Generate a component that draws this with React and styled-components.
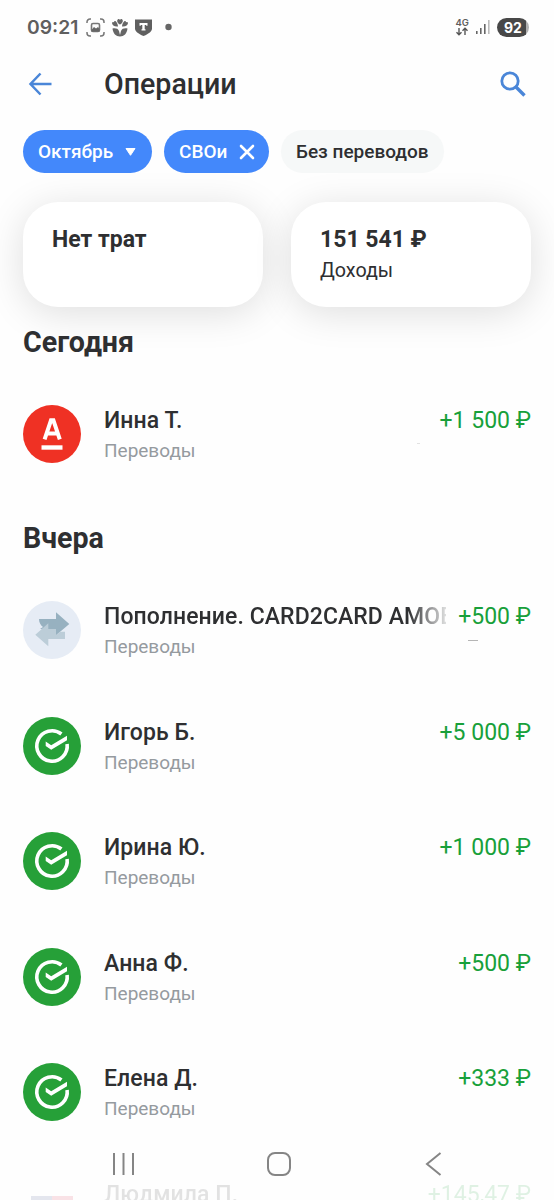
import React from 'react';
import styled, { createGlobalStyle } from 'styled-components';

const GlobalStyle = createGlobalStyle`
  * {
    box-sizing: border-box;
  }

  body {
    margin: 0;
    background: #fefefe;
    color: #2e2f31;
    font-family: Roboto, 'Liberation Sans', sans-serif;
  }
`;

const Screen = styled.div`
  position: relative;
  width: 554px;
  height: 1200px;
  overflow: hidden;
  background: #fefefe;
`;

const StatusBar = styled.div`
  display: flex;
  align-items: center;
  height: 54px;
  padding: 0 25px 0 27px;
  color: #5f5f5f;
`;

const Clock = styled.span`
  width: 52px;
  font-family: Inter, Roboto, sans-serif;
  font-size: 19.3px;
  font-weight: 600;
  white-space: nowrap;
`;

const StatusIcons = styled.div`
  display: flex;
  align-items: center;
  gap: 6px;
  margin-left: 7px;
`;

const Network = styled.div`
  display: flex;
  flex-direction: column;
  align-items: center;
  margin-left: auto;
  margin-right: 7px;
  font-family: Inter, Roboto, sans-serif;
  font-size: 9.5px;
  font-weight: 600;
  line-height: 9px;
`;

const Battery = styled.div`
  width: 32px;
  height: 19px;
  margin-left: 7px;
  border-radius: 10px;
  background: linear-gradient(90deg, #484848 92%, #b0b0b0 92%);
  color: #fff;
  font-family: Inter, Roboto, sans-serif;
  font-size: 14px;
  font-weight: 700;
  line-height: 19px;
  text-align: center;
`;

const Header = styled.header`
  display: flex;
  align-items: center;
  height: 60px;
  padding: 0 28px;
`;

const Title = styled.h1`
  flex: 1;
  margin: 0 0 0 52px;
  font-size: 28.6px;
  font-weight: 500;
  line-height: 36px;
`;

const Filters = styled.div`
  display: flex;
  gap: 12px;
  padding: 16px 23px 0;
`;

const Chip = styled.button`
  display: flex;
  align-items: center;
  justify-content: space-between;
  width: ${props => props.$width}px;
  height: 43px;
  padding: 0 14px 0 15px;
  border: none;
  border-radius: 22px;
  background: ${props => (props.$active ? '#4388fb' : '#f6f8f8')};
  color: ${props => (props.$active ? '#fff' : '#2e2f31')};
  font-family: inherit;
  font-size: 19px;
  font-weight: 500;
  white-space: nowrap;
`;

const Summary = styled.div`
  display: grid;
  grid-template-columns: 1fr 1fr;
  gap: 28px;
  padding: 29px 23px 0;
`;

const SummaryCard = styled.div`
  height: 105px;
  padding: 24px 29px;
  border-radius: 35px;
  background: #fff;
  box-shadow: 0 6px 38px rgba(0, 0, 0, 0.13);
`;

const SummaryValue = styled.div`
  font-size: 23px;
  font-weight: 700;
  line-height: 28px;
`;

const SummaryLabel = styled.div`
  margin-top: 4px;
  font-size: 19.7px;
  line-height: 26px;
`;

const SectionTitle = styled.h2`
  height: 36px;
  margin: ${props => props.$top}px 0 0 23px;
  font-size: 28.6px;
  font-weight: 700;
  line-height: 36px;
`;

const List = styled.div`
  padding: ${props => props.$top}px 23px 0;
`;

const Row = styled.div`
  position: relative;
  display: flex;
  align-items: center;
  height: 115.5px;
  opacity: ${props => (props.$faded ? 0.13 : 1)};
`;

const Details = styled.div`
  flex: 1;
  min-width: 0;
  margin-left: 23px;
  padding-top: 2.6px;
`;

const TopLine = styled.div`
  display: flex;
  justify-content: space-between;
  line-height: 30px;
`;

const Name = styled.span`
  flex: 1;
  min-width: 0;
  margin-right: 12px;
  overflow: hidden;
  font-size: 23px;
  font-weight: 500;
  letter-spacing: 0.08px;
  white-space: nowrap;
  mask-image: ${props =>
    props.$fade ? 'linear-gradient(90deg, #000 calc(100% - 38px), rgba(0, 0, 0, 0.15))' : 'none'};
`;

const Amount = styled.span`
  color: #18a03a;
  font-size: 23px;
  white-space: nowrap;
`;

const Category = styled.div`
  margin-top: 1px;
  color: #959a9f;
  font-size: 19px;
  line-height: 28px;
`;

const Mark = styled.i`
  position: absolute;
  right: ${props => props.$right}px;
  top: ${props => props.$top}px;
  width: ${props => props.$width}px;
  height: 1px;
  background: ${props => props.$color};
`;

const NavBar = styled.nav`
  position: absolute;
  left: 0;
  right: 0;
  bottom: 0;
  display: grid;
  grid-template-columns: 155px 155px 155px;
  align-items: center;
  justify-content: center;
  justify-items: center;
  height: 72px;
  padding-left: 3px;
`;

function AlfaLogo() {
  return (
    <svg width='58' height='58' viewBox='0 0 58 58'>
      <circle cx='29' cy='29' r='29' fill='#ef3124' />
      <path d='M21.600 34.400 28 15.300h2.400l6.400 19.100M24 28.500h11' fill='none' stroke='#fff' strokeWidth='4' />
      <path d='M18.500 40.300h21v4.400h-21z' fill='#fff' />
    </svg>
  );
}

function TransferLogo() {
  return (
    <svg width='58' height='58' viewBox='0 0 58 58'>
      <circle cx='29' cy='29' r='29' fill='#e6ecf5' />
      <path d='M16 18h17v-6.700l13.300 11.700L33 34.300V28H17l3-2c-2.500-2-4-4.500-4-8z' fill='#97b1c0' />
      <path d='M42 38H25.300v7.300L12.300 33.700l13-11.400V28H33v6.300l4-3.600h5z' fill='#bccdd8' />
    </svg>
  );
}

function SberLogo() {
  return (
    <svg width='58' height='58' viewBox='0 0 58 58'>
      <circle cx='29' cy='29' r='29' fill='#26a038' />
      <path d='M38.400 17A15.200 15.200 0 1 0 44.100 27' fill='none' stroke='#fff' strokeWidth='3.600' />
      <path d='M22.700 24.500 28.200 28.200 44 18.800v4.500L28.200 32.700 22.700 29z' fill='#fff' />
    </svg>
  );
}

function FlagLogo() {
  return (
    <svg width='58' height='58' viewBox='0 0 58 58'>
      <path d='M8 17h21v14H8z' fill='#3d4a8c' />
      <path d='M29 17h21v14H29z' fill='#d9304c' />
    </svg>
  );
}

const logos = {
  alfa: AlfaLogo,
  transfer: TransferLogo,
  sber: SberLogo,
  flag: FlagLogo
};

const today = [
  {
    name: 'Инна Т.',
    amount: '+1 500 ₽',
    logo: 'alfa',
    mark: { $right: 111, $top: 67, $width: 3, $color: '#e2e2e2' }
  }
];

const yesterday = [
  {
    name: 'Пополнение. CARD2CARD AMOB',
    amount: '+500 ₽',
    logo: 'transfer',
    fade: true,
    mark: { $right: 53, $top: 67, $width: 10, $color: '#b5b5b5' }
  },
  { name: 'Игорь Б.', amount: '+5 000 ₽', logo: 'sber' },
  { name: 'Ирина Ю.', amount: '+1 000 ₽', logo: 'sber' },
  { name: 'Анна Ф.', amount: '+500 ₽', logo: 'sber' },
  { name: 'Елена Д.', amount: '+333 ₽', logo: 'sber' },
  { name: 'Людмила П.', amount: '+145,47 ₽', logo: 'flag', faded: true }
];

function Operation({ item }) {
  const Logo = logos[item.logo];

  return (
    <Row $faded={item.faded}>
      <Logo />
      <Details>
        <TopLine>
          <Name $fade={item.fade}>{item.name}</Name>
          <Amount>{item.amount}</Amount>
        </TopLine>
        <Category>Переводы</Category>
      </Details>
      {item.mark && <Mark {...item.mark} />}
    </Row>
  );
}

function App() {
  return (
    <>
      <GlobalStyle />
      <Screen>
        <StatusBar>
          <Clock>09:21</Clock>
          <StatusIcons>
            <svg width='19' height='19' viewBox='0 0 19 19' fill='none' stroke='#777' strokeWidth='1.500'>
              <path d='M1 5V4a3 3 0 0 1 3-3h1M14 1h1a3 3 0 0 1 3 3v1M18 14v1a3 3 0 0 1-3 3h-1M5 18H4a3 3 0 0 1-3-3v-1' />
              <rect x='5.500' y='5.500' width='8' height='8' rx='1.500' strokeWidth='1.600' />
              <path d='m5.500 12 2.500-3 2 1.500 2-1.500 1.500 2v2.500h-8z' fill='#666' stroke='none' />
            </svg>
            <svg width='18' height='19' viewBox='0 0 18 19' fill='#666'>
              <path d='M9 6.500C6 5 5.500 2 7 1.200 8 .8 8.700 1.300 9 2c.3-.7 1-1.200 2-.8 1.500.8 1 3.800-2 5.300z' />
              <path d='M7 8.500C3.500 9 1 7 1 5c.2-1.200 1.300-1 2-.6C3 3 4 2.600 4.700 3.200 6 4.500 6.800 6 7 8.500zM11 8.500c3.500.5 6-1.500 6-3.500-.2-1.200-1.300-1-2-.6 0-1.400-1-1.800-1.700-1.200C12 4.500 11.200 6 11 8.500z' />
              <path d='M1.500 10.500c3-.5 5.500 0 6.500 2.500l1 4 1-4c1-2.500 3.500-3 6.500-2.500-.5 5-3.500 8-7.500 8s-7-3-7.500-8z' />
            </svg>
            <svg width='17' height='18' viewBox='0 0 17 18'>
              <path d='M0 1.500h17v8.700c0 3.300-3 5.300-8.500 7.800C3 15.500 0 13.500 0 10.200z' fill='#5f5f5f' />
              <path d='M4.500 5h8v2.700h-1.300V7H9.700v4.300h.8v1.200h-4v-1.200h.8V7H5.800v.7H4.500z' fill='#fff' />
            </svg>
            <svg width='20' height='8' viewBox='0 0 20 8'>
              <circle cx='10.500' cy='4' r='3.200' fill='#666' />
            </svg>
          </StatusIcons>
          <Network>
            <span>4G</span>
            <svg width='12' height='9' viewBox='0 0 12 9' fill='none' stroke='#555' strokeWidth='1.400'>
              <path d='M3 1v7M.5 5.300 3 7.800l2.500-2.500M9 8V1M6.500 3.700 9 1.200l2.500 2.500' />
            </svg>
          </Network>
          <svg width='14' height='16' viewBox='0 0 14 16'>
            <path d='M0 12h1.600v3H0zM4 9h1.600v6H4zM8 5h1.600v10H8z' fill='#666' />
            <path d='M12 1h1.600v14H12z' fill='#bbb' />
          </svg>
          <Battery>92</Battery>
        </StatusBar>

        <Header>
          <svg width='24' height='24' viewBox='0 0 24 24' fill='none' stroke='#4a86d8' strokeWidth='2.500'>
            <path d='M23.500 12H2.500M12.500 1.500 2.500 12l10 10.500' />
          </svg>
          <Title>Операции</Title>
          <svg width='26' height='26' viewBox='0 0 26 26' fill='none' stroke='#4a86d8'>
            <circle cx='10' cy='10' r='8.200' strokeWidth='2.800' />
            <path d='m16 16 8.500 8.500' strokeWidth='3.400' />
          </svg>
        </Header>

        <Filters>
          <Chip $active $width={129}>
            Октябрь
            <svg width='14' height='9' viewBox='0 0 14 9'>
              <path d='M2 1.500h9L6.500 8.300z' fill='#fff' stroke='#fff' strokeLinejoin='round' />
            </svg>
          </Chip>
          <Chip $active $width={105}>
            СВОи
            <svg width='16' height='16' viewBox='0 0 16 16' fill='none' stroke='#fff' strokeWidth='2.600'>
              <path d='m2 2 12 12M14 2 2 14' strokeLinecap='round' />
            </svg>
          </Chip>
          <Chip $width={163}>Без переводов</Chip>
        </Filters>

        <Summary>
          <SummaryCard>
            <SummaryValue>Нет трат</SummaryValue>
          </SummaryCard>
          <SummaryCard>
            <SummaryValue>151 541 ₽</SummaryValue>
            <SummaryLabel>Доходы</SummaryLabel>
          </SummaryCard>
        </Summary>

        <SectionTitle $top={17}>Сегодня</SectionTitle>
        <List $top={16}>
          {today.map(item => (
            <Operation key={item.name} item={item} />
          ))}
        </List>

        <SectionTitle $top={28}>Вчера</SectionTitle>
        <List $top={17}>
          {yesterday.map(item => (
            <Operation key={item.name} item={item} />
          ))}
        </List>

        <NavBar>
          <svg width='26' height='24' viewBox='0 0 26 24' stroke='#858585' strokeWidth='2'>
            <path d='M3 1v22M12.500 1v22M22 1v22' />
          </svg>
          <svg width='24' height='24' viewBox='0 0 24 24' fill='none' stroke='#858585' strokeWidth='2'>
            <rect x='1' y='1' width='22' height='22' rx='7' />
          </svg>
          <svg width='18' height='24' viewBox='0 0 18 24' fill='none' stroke='#858585' strokeWidth='2'>
            <path d='M15.500 1 2 12l13.500 11' />
          </svg>
        </NavBar>
      </Screen>
    </>
  );
}

export default App;
